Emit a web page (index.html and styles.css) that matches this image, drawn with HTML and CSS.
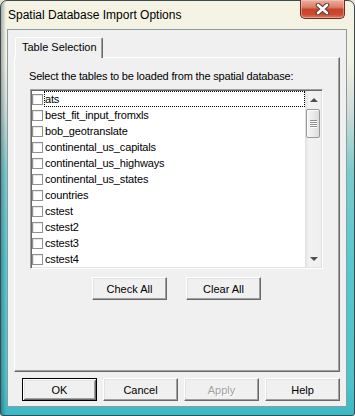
FILE: index.html
```html
<!DOCTYPE html>
<html>
<head>
<meta charset="utf-8">
<title>Spatial Database Import Options</title>
<link rel="stylesheet" href="styles.css">
</head>
<body>
<div class="window">
  <div class="titlebar">
    <span class="title">Spatial Database Import Options</span>
    <div class="close">
      <svg width="15" height="12" viewBox="0 0 15 12">
        <path d="M3 2 L12 10 M12 2 L3 10" stroke="#5a3a36" stroke-width="4.6" stroke-linecap="round"/>
        <path d="M3 2 L12 10 M12 2 L3 10" stroke="#ffffff" stroke-width="2.6" stroke-linecap="round"/>
      </svg>
    </div>
  </div>
  <div class="client">
    <div class="tabs"><div class="tab">Table Selection</div></div>
    <div class="panel">
      <div class="label">Select the tables to be loaded from the spatial database:</div>
      <div class="listbox">
        <div class="items">
          <div class="item focus"><span class="cb"></span><span class="txt">ats</span></div>
          <div class="item"><span class="cb"></span><span class="txt">best_fit_input_fromxls</span></div>
          <div class="item"><span class="cb"></span><span class="txt">bob_geotranslate</span></div>
          <div class="item"><span class="cb"></span><span class="txt">continental_us_capitals</span></div>
          <div class="item"><span class="cb"></span><span class="txt">continental_us_highways</span></div>
          <div class="item"><span class="cb"></span><span class="txt">continental_us_states</span></div>
          <div class="item"><span class="cb"></span><span class="txt">countries</span></div>
          <div class="item"><span class="cb"></span><span class="txt">cstest</span></div>
          <div class="item"><span class="cb"></span><span class="txt">cstest2</span></div>
          <div class="item"><span class="cb"></span><span class="txt">cstest3</span></div>
          <div class="item"><span class="cb"></span><span class="txt">cstest4</span></div>
        </div>
        <div class="vscroll">
          <div class="arrow up"></div>
          <div class="track"><div class="thumb"><i></i><i></i><i></i><i></i></div></div>
          <div class="arrow down"></div>
        </div>
      </div>
      <div class="actions">
        <button class="btn">Check All</button>
        <button class="btn">Clear All</button>
      </div>
    </div>
    <div class="footer">
      <button class="btn default">OK</button>
      <button class="btn">Cancel</button>
      <button class="btn" disabled>Apply</button>
      <button class="btn">Help</button>
    </div>
  </div>
</div>
</body>
</html>
```
FILE: styles.css
```css
* { box-sizing: border-box; }
html, body { margin: 0; padding: 0; }
body {
  width: 355px;
  height: 416px;
  overflow: hidden;
  background: #e4e2d4;
  font-family: "Liberation Sans", Arial, sans-serif;
  font-size: 11px;
  color: #000;
}
.window {
  width: 355px;
  height: 416px;
  border: 1px solid #3d4a4e;
  border-radius: 7px 7px 3px 3px;
  padding: 0 7px 8px 6px;
  display: flex;
  flex-direction: column;
  background:
    linear-gradient(90deg, rgba(20,40,60,0.35) 0px, rgba(20,40,60,0) 5px, rgba(0,0,0,0) 100%),
    linear-gradient(180deg, #f5f4e4 0px, #f2f1e2 60px, #cfdcd6 110px, #7ccbcc 170px, #56c8cf 260px, #4cc3cc 380px, #3bb9c6 100%);
}
.titlebar {
  height: 28px;
  display: flex;
  align-items: flex-start;
}
.title {
  flex: 1;
  font-family: "Liberation Sans", Arial, sans-serif;
  font-size: 12px;
  line-height: 28px;
  padding-left: 1px;
  color: #000;
  white-space: nowrap;
}
.close {
  width: 45px;
  height: 19px;
  margin-top: -1px;
  margin-right: 2px;
  border: 1px solid #6e2b20;
  border-top: none;
  border-radius: 0 0 5px 5px;
  background: linear-gradient(180deg, #eab1a2 0%, #dd7d66 40%, #c7432a 52%, #cc4a30 80%, #dd7a5e 100%);
  box-shadow: inset 0 0 0 1px rgba(255,210,200,0.45);
  display: flex;
  align-items: center;
  justify-content: center;
}
.close svg { display: block; }
.client {
  flex: 1;
  background: #f0f0f0;
  border: 1px solid #8d9aa0;
  display: flex;
  flex-direction: column;
  padding: 7px 6px 5px 6px;
}
.tabs {
  height: 20px;
  display: flex;
  align-items: flex-end;
  padding-left: 1px;
}
.tab {
  position: relative;
  z-index: 1;
  width: 88px;
  height: 21px;
  margin-bottom: -1px;
  padding-left: 6px;
  line-height: 19px;
  background: #f0f0f0;
  border-top: 1px solid #fff;
  border-left: 1px solid #fff;
  border-right: 1px solid #696969;
  border-radius: 2px 2px 0 0;
  box-shadow: inset -1px 0 #a0a0a0;
  white-space: nowrap;
}
.panel {
  flex: 1;
  border: 1px solid;
  border-color: #fff #696969 #696969 #fff;
  box-shadow: inset -1px -1px #a0a0a0;
  padding: 12px 0 0 14px;
  display: flex;
  flex-direction: column;
}
.label {
  height: 13px;
  line-height: 13px;
  white-space: nowrap;
  letter-spacing: -0.18px;
}
.listbox {
  margin: 6px 0 0 1px;
  width: 293px;
  height: 180px;
  display: flex;
  border: 1px solid;
  border-color: #a0a0a0 #fff #fff #a0a0a0;
  box-shadow: inset 1px 1px #696969, inset -1px -1px #e3e3e3;
  background: #fff;
  padding: 1px;
}
.items {
  flex: 1;
  display: flex;
  flex-direction: column;
}
.item {
  height: 16px;
  display: flex;
  align-items: center;
}
.cb {
  flex: none;
  width: 11px;
  height: 11px;
  margin-top: 1px;
  margin-right: 1px;
  border: 1px solid #8f8f8f;
  background: #fff;
  box-shadow: inset 1px 1px #e8e8e8;
}
.txt {
  flex: 1;
  height: 16px;
  line-height: 14px;
  border: 1px dotted transparent;
  white-space: nowrap;
  letter-spacing: -0.15px;
}
.item.focus .txt { border-color: #000; }
.vscroll {
  width: 16px;
  display: flex;
  flex-direction: column;
  background: linear-gradient(90deg, #e6e6e6 0px, #f2f2f2 3px, #efefef 100%);
  border-left: 1px solid #e2e2e2;
}
.arrow {
  height: 17px;
  display: flex;
  align-items: center;
  justify-content: center;
}
.arrow::before {
  content: "";
  width: 0;
  height: 0;
  border-left: 4px solid transparent;
  border-right: 4px solid transparent;
}
.arrow.up::before { border-bottom: 4px solid #4e4e4e; }
.arrow.down::before { border-top: 4px solid #4e4e4e; }
.track {
  flex: 1;
  padding: 1px 1px 0 0;
}
.thumb {
  height: 29px;
  border: 1px solid #979797;
  border-radius: 2px;
  background: linear-gradient(90deg, #f5f5f5 0%, #ececec 50%, #dcdcdc 100%);
  box-shadow: inset 1px 1px #fff;
  display: flex;
  flex-direction: column;
  align-items: center;
  justify-content: center;
  gap: 1px;
}
.thumb i {
  display: block;
  width: 7px;
  height: 1px;
  background: #8c8c8c;
  box-shadow: 0 1px #fff;
}
.actions {
  width: 293px;
  margin: 8px 0 0 1px;
  display: flex;
  justify-content: center;
  gap: 19px;
}
.btn {
  width: 75px;
  height: 23px;
  padding: 0;
  font-family: "Liberation Sans", Arial, sans-serif;
  font-size: 11px;
  color: #000;
  background: #f0f0f0;
  border: 1px solid;
  border-color: #fff #696969 #696969 #fff;
  box-shadow: inset -1px -1px #a0a0a0, inset 1px 1px #e3e3e3;
  border-radius: 0;
}
.btn.default {
  border: 1px solid #000;
  box-shadow: inset 1px 1px #fff, inset -1px -1px #696969, inset 2px 2px #e3e3e3, inset -2px -2px #a0a0a0;
}
.btn:disabled {
  color: #a0a0a0;
  text-shadow: 1px 1px #fff;
}
.footer {
  margin-top: 6px;
  display: flex;
  justify-content: flex-end;
  gap: 6px;
}
```
